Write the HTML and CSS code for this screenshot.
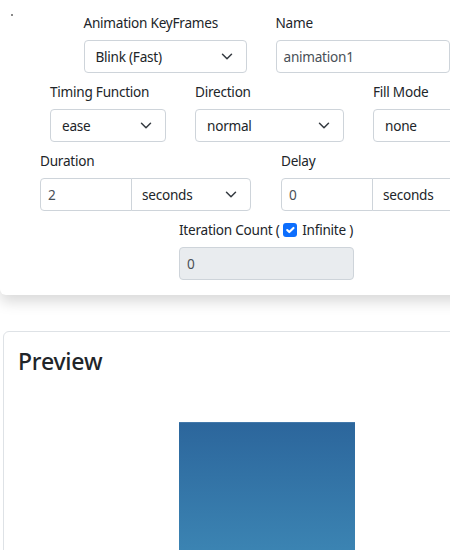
FILE: index.html
```html
<!DOCTYPE html>
<html lang="en">
<head>
<meta charset="utf-8">
<title>Animation</title>
<link rel="stylesheet" href="styles.css">
</head>
<body>
<div class="page">
  <section class="card settings">
    <span class="dot"></span>
    <div class="row">
      <div class="field w163">
        <label class="label">Animation KeyFrames</label>
        <div class="select"><span>Blink (Fast)</span><svg class="chev" viewBox="0 0 16 12" width="12" height="9"><path d="M2 3l6 6 6-6" fill="none" stroke="#343a40" stroke-width="2" stroke-linecap="round" stroke-linejoin="round"/></svg></div>
      </div>
      <div class="field w174">
        <label class="label">Name</label>
        <div class="input">animation1</div>
      </div>
    </div>
    <div class="row">
      <div class="field w116">
        <label class="label">Timing Function</label>
        <div class="select"><span>ease</span><svg class="chev" viewBox="0 0 16 12" width="12" height="9"><path d="M2 3l6 6 6-6" fill="none" stroke="#343a40" stroke-width="2" stroke-linecap="round" stroke-linejoin="round"/></svg></div>
      </div>
      <div class="field w149">
        <label class="label">Direction</label>
        <div class="select"><span>normal</span><svg class="chev" viewBox="0 0 16 12" width="12" height="9"><path d="M2 3l6 6 6-6" fill="none" stroke="#343a40" stroke-width="2" stroke-linecap="round" stroke-linejoin="round"/></svg></div>
      </div>
      <div class="field w110">
        <label class="label">Fill Mode</label>
        <div class="select"><span>none</span><svg class="chev" viewBox="0 0 16 12" width="12" height="9"><path d="M2 3l6 6 6-6" fill="none" stroke="#343a40" stroke-width="2" stroke-linecap="round" stroke-linejoin="round"/></svg></div>
      </div>
    </div>
    <div class="row">
      <div class="field w212">
        <label class="label">Duration</label>
        <div class="group">
          <div class="input gnum">2</div>
          <div class="select gsel"><span>seconds</span><svg class="chev" viewBox="0 0 16 12" width="12" height="9"><path d="M2 3l6 6 6-6" fill="none" stroke="#343a40" stroke-width="2" stroke-linecap="round" stroke-linejoin="round"/></svg></div>
        </div>
      </div>
      <div class="field w212">
        <label class="label">Delay</label>
        <div class="group">
          <div class="input gnum">0</div>
          <div class="select gsel"><span>seconds</span><svg class="chev" viewBox="0 0 16 12" width="12" height="9"><path d="M2 3l6 6 6-6" fill="none" stroke="#343a40" stroke-width="2" stroke-linecap="round" stroke-linejoin="round"/></svg></div>
        </div>
      </div>
    </div>
    <div class="row last">
      <div class="field w175">
        <label class="label">Iteration Count ( <span class="check"><svg viewBox="0 0 20 20" width="14" height="14"><path d="M6 10l3 3 6-6" fill="none" stroke="#fff" stroke-width="3" stroke-linecap="round" stroke-linejoin="round"/></svg></span> Infinite )</label>
        <div class="input disabled">0</div>
      </div>
    </div>
  </section>

  <section class="card preview">
    <h3 class="title">Preview</h3>
    <div class="box"></div>
  </section>
</div>
</body>
</html>
```

FILE: styles.css
```css
html, body {
  margin: 0;
  padding: 0;
  overflow: hidden;
  background: #fff;
}
body {
  font-family: "Segoe UI", "Noto Sans", "Open Sans", sans-serif;
  font-size: 13.6px;
  letter-spacing: -0.25px;
  line-height: 21px;
  color: #212529;
}
.page {
  width: 533px;
}
.card {
  background: #fff;
  box-sizing: border-box;
}
.settings {
  position: relative;
  padding: 12px 0 15px;
  border-radius: 0 0 6px 6px;
  box-shadow: 0 7px 14px rgba(0, 0, 0, 0.15);
}
.dot {
  position: absolute;
  left: 11px;
  top: 14px;
  width: 2px;
  height: 2px;
  background: #8a8a8a;
}
.row {
  display: flex;
  justify-content: center;
  gap: 29px;
  margin-bottom: 8px;
}
.row.last {
  margin-bottom: 0;
}
.field {
  display: flex;
  flex-direction: column;
}
.w163 { width: 163px; }
.w174 { width: 174px; }
.w116 { width: 116px; }
.w149 { width: 149px; }
.w110 { width: 110px; }
.w212 { width: 212px; }
.w175 { width: 175px; }
.label {
  display: flex;
  align-items: center;
  white-space: pre;
  margin-bottom: 7px;
  line-height: 21px;
}
.check {
  display: inline-flex;
  width: 14px;
  height: 14px;
  margin: 0 2px 0 0;
  background: #0d6efd;
  border-radius: 3px;
}
.input, .select {
  box-sizing: border-box;
  height: 33px;
  border: 1px solid #ced4da;
  border-radius: 4px;
  display: flex;
  align-items: center;
  background: #fff;
  white-space: nowrap;
}
.input {
  padding: 0 7px;
  color: #495057;
}
.select {
  padding: 0 13px 0 11px;
  justify-content: space-between;
  color: #212529;
}
.chev {
  display: block;
  flex: none;
}
.disabled {
  background: #e9ecef;
}
.group {
  display: flex;
}
.gnum {
  width: 92px;
  border-radius: 4px 0 0 4px;
}
.gsel {
  width: 120px;
  margin-left: -1px;
  border-radius: 0 4px 4px 0;
  padding-left: 10px;
}
.preview {
  margin: 36px 3px 0;
  border: 1px solid #dee2e6;
  border-radius: 6px;
  padding: 14px 14px 0;
}
.title {
  margin: 0;
  font-size: 23px;
  font-weight: 500;
  letter-spacing: -0.2px;
  line-height: 30px;
}
.box {
  width: 176px;
  height: 176px;
  margin: 46px auto 0;
  background: linear-gradient(#2c669c, #418fbb);
  border-top: 1px solid #4379ab;
}
```
